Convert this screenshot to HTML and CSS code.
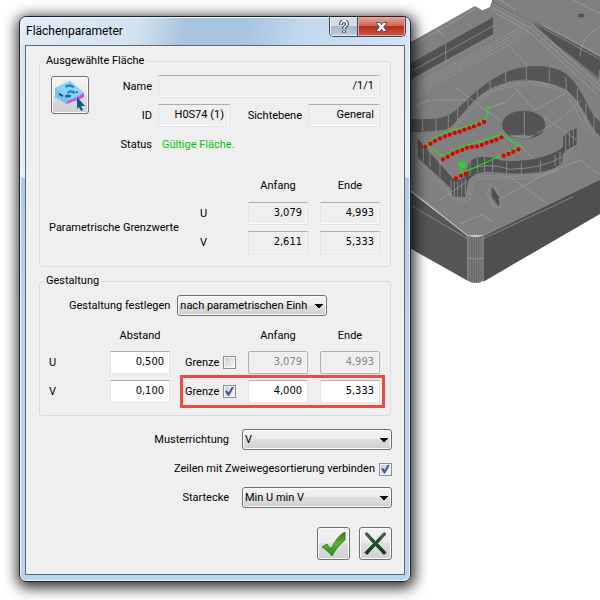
FILE: index.html
```
<!DOCTYPE html>
<html lang="de">
<head>
  <meta charset="UTF-8">
  <meta name="viewport" content="width=device-width, initial-scale=1.0">
  <title>Flächenparameter</title>
  <link rel="stylesheet" href="styles.css">
</head>
<body>

  <div class="dialog">
    <div class="titlebar">
      <span class="title">Flächenparameter</span>
      <div class="winbtns">
        <button type="button" class="help" aria-label="Hilfe">
          <svg width="10" height="14" viewBox="0 0 10 14">
            <path d="M2 5V4a3 3 0 0 1 6 0c0 2-3 2.300-3 5M5 10.500v2.500" fill="none" stroke="#3c4456" stroke-width="3.800"/>
            <path d="M2 4.500V4a3 3 0 0 1 6 0c0 2-3 2.300-3 4.500M5 11v1.500" fill="none" stroke="#fff" stroke-width="1.800"/>
          </svg>
        </button>
        <button type="button" class="close" aria-label="Schließen">
          <svg width="13" height="12" viewBox="0 0 13 12">
            <path d="M1 1.500h3.500l2 2.300 2-2.300H12L8.700 6l3.300 4.500H8.500l-2-2.300-2 2.300H1L4.300 6z" fill="#fff" stroke="#535666"/>
          </svg>
        </button>
      </div>
    </div>

    <form class="client">
      <fieldset>
        <legend>Ausgewählte Fläche</legend>
        <div class="selected">
          <button type="button" class="pick" aria-label="Fläche wählen">
            <svg width="34" height="34" viewBox="0 0 34 34">
              <path d="M2 10 17 3l14 12v2L14 26 2 19z" fill="#62bdea"/>
              <path d="M2 10 17 3l14 12-15 7z" fill="#8ad3f6"/>
              <path d="M2 10v9l12 7 2-4z" fill="#74c4ee"/>
              <path d="M13 26c2-5 6-4 9-5 3-1 5-4 9-6v4c-5 3-10 4-18 7z" fill="#e83ae0"/>
              <path d="M12 8c3-3 8-2 10 1l-3 1c-2-2-4-1-6 0zM14 14c3-3 8-2 9 1l-3 1c-1-2-3-1-5 0z" fill="#2a86c0"/>
              <path d="M6 15l4 2v2l-4-2z" fill="#1f3f66"/>
              <ellipse cx="15" cy="18" rx="3" ry="1.500" fill="#23639a"/>
              <circle cx="24" cy="14" r="1" fill="#23639a"/>
              <path d="M24 19v12l2-2 2 4 2-1-2-4h4z" fill="#0a5c86"/>
            </svg>
          </button>
          <div class="fields">
            <label for="name">Name</label>
            <input type="text" id="name" class="wide" value="/1/1" readonly>
            <label for="id">ID</label>
            <input type="text" id="id" value="H0S74 (1)" readonly>
            <label for="plane">Sichtebene</label>
            <input type="text" id="plane" value="General" readonly>
            <span class="lbl">Status</span>
            <output class="status wide">Gültige Fläche.</output>
          </div>
        </div>
        <div class="limits">
          <span class="head from">Anfang</span>
          <span class="head">Ende</span>
          <span class="caption">Parametrische Grenzwerte</span>
          <span class="axis">U</span>
          <input type="text" class="num" value="3,079" aria-label="U Anfang" readonly>
          <input type="text" class="num" value="4,993" aria-label="U Ende" readonly>
          <span class="axis">V</span>
          <input type="text" class="num" value="2,611" aria-label="V Anfang" readonly>
          <input type="text" class="num" value="5,333" aria-label="V Ende" readonly>
        </div>
      </fieldset>

      <fieldset>
        <legend>Gestaltung</legend>
        <div class="define">
          <label for="mode">Gestaltung festlegen</label>
          <select id="mode"><option>nach parametrischen Einheiten</option></select>
        </div>
        <div class="row heads">
          <span class="axis"></span>
          <span class="head">Abstand</span>
          <div class="range">
            <span class="head">Anfang</span>
            <span class="head">Ende</span>
          </div>
        </div>
        <div class="row">
          <label class="axis" for="stepu">U</label>
          <input type="text" class="num" id="stepu" value="0,500">
          <div class="range">
            <label class="limit">Grenze <input type="checkbox"></label>
            <input type="text" class="num" value="3,079" aria-label="U Anfang" disabled>
            <input type="text" class="num" value="4,993" aria-label="U Ende" disabled>
          </div>
        </div>
        <div class="row">
          <label class="axis" for="stepv">V</label>
          <input type="text" class="num" id="stepv" value="0,100">
          <div class="range marked">
            <label class="limit">Grenze <input type="checkbox" checked></label>
            <input type="text" class="num" value="4,000" aria-label="V Anfang">
            <input type="text" class="num" value="5,333" aria-label="V Ende">
          </div>
        </div>
      </fieldset>

      <div class="options">
        <div class="option">
          <label for="dir">Musterrichtung</label>
          <select id="dir"><option>V</option></select>
        </div>
        <label class="option check">Zeilen mit Zweiwegesortierung verbinden <input type="checkbox" checked></label>
        <div class="option">
          <label for="corner">Startecke</label>
          <select id="corner"><option>Min U min V</option></select>
        </div>
      </div>

      <div class="actions">
        <button type="submit" aria-label="OK">
          <svg width="29" height="29" viewBox="0 0 29 29">
            <defs>
              <linearGradient id="ok" x1="0" y1="0" x2="0" y2="1"><stop offset="0" stop-color="#3f7a2c"/><stop offset=".5" stop-color="#5cb52c"/><stop offset="1" stop-color="#2f8a10"/></linearGradient>
              <linearGradient id="no" x1="0" y1="0" x2="0" y2="1"><stop offset="0" stop-color="#41624a"/><stop offset="1" stop-color="#0b3a0b"/></linearGradient>
            </defs>
            <path d="M3 18l5-3 4 5C16 12 20 6 26 3v8c-5 4-9 9-13 16-3-4-6-6-10-9z" fill="url(#ok)" stroke="#2f7a1c" stroke-width=".8"/>
          </svg>
        </button>
        <button type="button" aria-label="Abbrechen">
          <svg width="29" height="29" viewBox="0 0 29 29">
            <path d="M4 5l2-1.500 8.500 9L23 3.500 25 5l-8.500 9.500 8.500 9-2 2-8.500-9L6 25.500l-2-2 8.500-9z" fill="url(#no)" stroke="url(#no)" stroke-linejoin="round"/>
          </svg>
        </button>
      </div>
    </form>
  </div>

  <svg class="scene" viewBox="33 0 567 900" role="img" aria-label="3D-Modell">
    <!-- block -->
    <path d="M0 145 225 18l22 13 22-9 8-22H600V540L250 706H203L0 545z" fill="#808080"/>
    <path d="M0 550 203 708V842L0 728z" fill="#565656"/>
    <path d="M250 706 600 538V642L250 845z" fill="#4f4f4f"/>
    <path d="M203 706q24 10 47 0V842q-22 14-47 0z" fill="#606060"/>
    <!-- walls -->
    <path d="M0 207 279 52v53L0 258z" fill="#535353"/>
    <path d="M277 0v12L395 72 600 244V172L283 0z" fill="#707070"/>
    <path d="M395 62 540 138 600 172V235L465 130z" fill="#535353"/>
    <path d="M0 357H70C150 360 160 335 200 300C260 245 320 198 410 198C500 200 520 240 545 280C565 320 580 350 600 365V408C570 385 550 310 500 270C440 235 340 230 270 266C215 295 190 350 145 388C120 400 80 395 0 398z" fill="#565656"/>
    <path d="M52 420C50 395 75 392 100 394L145 388 200 470 202 520 165 545 52 438z" fill="#808080"/>
    <path d="M52 415 55 475 150 562 158 590H196L203 548C215 520 240 515 270 515C350 525 450 525 487 490L490 440C450 475 350 490 300 480C250 465 215 465 203 500C200 535 180 548 158 535z" fill="#525252"/>
    <path d="M490 410Q505 390 530 385V435Q500 445 488 462z" fill="#515151"/>
    <path d="M275 560 298 592V620L275 590z" fill="#4e4e4e"/>
    <ellipse cx="371" cy="375" rx="65" ry="43" fill="#545454"/>
    <path d="M331 409q35-12 70 2-35 14-70-2z" fill="#7c7c7c"/>

    <!-- mesh -->
    <g class="mesh">
      <path d="M36 213 279 78M137 133v55M36 138 225 28M105 85l28 24M36 238 279 105"/>
      <path d="M277 10 395 72 600 258M283 3 600 178M280 24 392 85 600 272M275 32 388 96 590 282M300 0l48 30M520 0l80 40M430 75 600 168M540 168q0-55 60-88M325 138l60 58M440 155l20-25"/>
      <path d="M36 262 370 78M36 272 378 84M36 282 386 90M36 292 394 97" stroke-dasharray="5 2"/>
      <path d="M68 357v39M108 358v38M145 346v42M173 324v36M204 297v25M233 272v24M270 243v24M317 215v32M379 198v42M448 205v40M498 232v38M532 265v48M558 310v48M582 345v48"/>
      <path d="M145 390C190 350 210 300 275 272C340 238 440 240 500 276C545 315 555 375 585 410M155 392C200 350 220 305 280 277C350 245 440 248 490 280C535 320 540 370 570 405M320 248q55-18 120 5" stroke-dasharray="6 2"/>
      <path d="M100 300 200 300M165 260 245 322 300 360M345 265l60 65 90-50M495 345l50-45M430 350l100 70M410 400q40-20 80-50M350 425l50 50M36 322 90 300M260 325l60-20 40-40"/>
      <path d="M373 333v82M331 405q40 14 70 0"/>
      <path d="M70 430v55M90 450v52M120 478v55M153 540v35M163 545v45M173 545v45M185 542v48M196 535v48M210 485v42M232 472v45M254 470v46M278 478v38M320 485v35M364 488v33M421 482v33M465 465v32M480 455v38M508 392v48M520 388v49M497 400v53"/>
      <path d="M203 510Q260 485 330 508Q430 505 487 470"/>
      <path d="M205 550C225 510 280 535 370 528C430 528 470 510 490 482Q500 450 535 435M210 560C225 520 290 540 370 535C440 535 480 510 495 490Q510 460 542 445M50 430l-12-12M54 485 150 575q15 30 48 20l14-35M50 495 145 580q22 36 63 20l12-40" stroke-dasharray="5 3"/>
      <path d="M120 600 200 545M295 600 430 525 540 480M330 532 445 612M180 672l65-28 35 22M36 575 203 708h47L600 538M36 618 203 716M250 716 520 590M540 480l60 45"/>
      <path d="M262 580l10-25 12 5 17 35v28l-22-8zM268 590l12 30 18 8" stroke-dasharray="4 2"/>
      <path d="M206 708v136M212 709v138M219 710v138M226 710v139M233 710v139M240 709v138M246 708v137M203 772q24 10 48 0"/>
      <path d="M598 210v34"/>
    </g>
    <path d="M535 42h16v9h-16zM543 38v16" fill="#4f4f4f" stroke="#4f4f4f"/>

    <!-- tool path and points -->
    <path class="toolpath" d="M266 321 256 360 225 372 140 397 105 412 77 434 130 468 180 443 210 433 305 403 355 438 330 455 178 523 187 503"/>
    <g class="toolpath">
      <circle cx="187" cy="494" r="9"/>
      <path d="M187 485v18M178 494h18"/>
    </g>
    <g class="points">
      <path d="M76 440h0M91 431h0M105 423h0M120 415h0M135 409h0M149 404h0M164 399h0M179 395h0M193 389h0M208 384h0M222 379h0M237 373h0M252 366h0"/>
      <path d="M129 478h0M143 470h0M158 461h0M172 455h0M187 450h0M201 443h0M216 441h0M231 439h0M246 435h0M260 429h0M275 424h0M289 419h0M304 412h0"/>
      <path d="M311 467h0M326 462h0M340 455h0M355 448h0M168 535h0M183 527h0M197 521h0"/>
    </g>
  </svg>

</body>
</html>
```
FILE: styles.css
```
* {
  box-sizing: border-box;
}

body {
  margin: 0;
  padding-left: 19px;
  min-height: 100vh;
  display: flex;
  align-items: flex-start;
  background-color: #fff;
  color: #000;
  font: 11px/16px Roboto, "Liberation Sans", sans-serif;
}

input, select, button {
  font: inherit;
  color: inherit;
  margin: 0;
}

/* window */
.dialog {
  position: relative;
  z-index: 1;
  flex: 1;
  min-width: 0;
  margin-top: 16px;
  padding: 0 5px 6px;
  border: 1px solid #1c232c;
  border-radius: 7px;
  background: linear-gradient(#d6e5f4 28px, #e6f0fa 160px, #aecbe6 161px, #b8d4ee 300px, #b8d4ee);
  box-shadow: inset 0 0 0 1px #eef6fd, 1px 3px 14px 3px rgba(0, 0, 0, .8);
}

.titlebar {
  display: flex;
  justify-content: space-between;
  height: 28px;
  margin: 0 -4px;
  padding: 0 3px 0 5px;
  border-radius: 6px 6px 0 0;
  border-top: 1px solid #eef6fd;
  background: linear-gradient(100deg, #e2edf7, #d3e2f1 30%, #a8c4df 42%, #a8c4df 58%, #c2d8ee 72%, #d3e4f5);
}

.title {
  line-height: 26px;
  font-size: 12px;
}

.winbtns {
  display: flex;
  height: 20px;
  margin-top: -1px;
  border: 1px solid #3f4a5a;
  border-top: 0;
  border-radius: 0 0 5px 5px;
  overflow: hidden;
}

.winbtns button {
  display: flex;
  justify-content: center;
  align-items: center;
  padding: 0;
  border: 1px solid rgba(255, 255, 255, .6);
}

.help {
  width: 28px;
  background: linear-gradient(#d3deea 45%, #a5b6c8 46%, #bccbdc);
}

.winbtns .close {
  width: 47px;
  border-color: #e9a59c;
  box-shadow: -1px 0 #3f4a5a;
  background: linear-gradient(#e39f92, #cf6654 45%, #b02c18 46%, #d0503c);
}

.client {
  padding: 7px 12px 14px 13px;
  border: 1px solid #5a6878;
  background-color: #efefef;
}

/* groups */
fieldset {
  min-width: 0;
  margin: 0 1px 6px 0;
  padding: 6px 10px 12px 9px;
  border: 1px solid #d3dde6;
  border-radius: 3px;
}

legend {
  margin-left: -5px;
  padding: 0 2px;
}

input[type="text"] {
  width: 100%;
  min-width: 0;
  height: 23px;
  padding: 0 5px 2px;
  border: 1px solid #e0e3e9;
  border-top-color: #abadb3;
  border-radius: 1px;
  background-color: #fff;
  text-align: right;
}

.num {
  font-family: "DejaVu Sans Condensed", "DejaVu Sans", sans-serif;
}

input[type="text"]:read-only {
  background-color: #efefef;
  box-shadow: inset -1px -1px #fafafa;
}

input[type="text"]:disabled {
  border-color: #afafaf;
  border-radius: 2px;
  background-color: #efefef;
  color: #838383;
}

.selected {
  display: flex;
  align-items: flex-start;
  padding-left: 2px;
}

.pick,
.actions button {
  display: flex;
  justify-content: center;
  align-items: center;
  padding: 0;
  border: 1px solid #707070;
  border-radius: 3px;
  background: linear-gradient(#f3f3f3, #ebebeb 49%, #dedede 50%, #d0d0d0);
  box-shadow: inset 0 0 0 1px #fbfbfb;
}

.pick {
  width: 38px;
  height: 38px;
  margin-top: 1px;
}

.fields {
  flex: 1;
  display: grid;
  grid-template-columns: 63px 1fr 66px 1fr;
  grid-auto-rows: 23px;
  align-items: center;
  gap: 6px;
}

.fields label,
.fields .lbl {
  text-align: right;
}

.wide {
  grid-column: 2 / 5;
}

.status {
  padding-left: 4px;
  color: #00c800;
}

.limits {
  display: grid;
  grid-template-columns: 1fr 46px 60px 60px;
  align-items: center;
  gap: 6px 12px;
  margin-top: 22px;
}

.from {
  grid-column: 3;
}

.caption {
  grid-row: 2 / 4;
  min-width: 0;
  white-space: nowrap;
}

.head {
  text-align: center;
}

.limits .head {
  padding-bottom: 2px;
}

.limits .axis {
  padding-left: 10px;
}

select {
  appearance: none;
  width: 150px;
  height: 21px;
  padding: 0 19px 0 2px;
  border: 1px solid #707070;
  border-radius: 3px;
  background:
    conic-gradient(from -45deg at 50% 100%, #000 90deg, transparent 0) right 3px center / 8px 4px no-repeat,
    linear-gradient(#f4f4f4, #ebebeb 49%, #dedede 50%, #d0d0d0);
  box-shadow: inset 0 0 0 1px #fbfbfb;
}

.define {
  display: flex;
  align-items: center;
  gap: 7px;
  padding-left: 20px;
}

.row {
  display: flex;
  align-items: center;
  justify-content: space-between;
  margin-top: 6px;
}

.heads {
  margin: 12px 0 7px;
}

.row > .axis {
  width: 61px;
}

.row > input[type="text"],
.row > .head {
  width: 60px;
}

.row .range {
  display: flex;
  justify-content: flex-end;
  gap: 12px;
  flex: 1;
  margin-left: 15px;
}

.range .head,
.range input[type="text"] {
  width: 60px;
}

.limit,
.check {
  display: flex;
  align-items: center;
}

.limit {
  flex: 1;
  justify-content: space-between;
}

/* highlighted row */
.marked {
  outline: 3px solid #e84c46;
  outline-offset: 2px;
}

input[type="checkbox"] {
  appearance: none;
  width: 13px;
  height: 13px;
  border: 1px solid #8e8f8f;
  background: linear-gradient(135deg, #c9cdd3, #f8f8f8) center / 9px 9px no-repeat #f4f4f4;
}

input[type="checkbox"]:checked::after {
  content: "";
  display: block;
  width: 9px;
  height: 9px;
  margin: 1px;
  background-color: #41589c;
  clip-path: polygon(0 45%, 22% 38%, 40% 62%, 75% 0, 100% 0, 45% 100%, 32% 100%);
}

/* options */
.options {
  margin-top: 13px;
}

.option {
  display: flex;
  align-items: center;
  justify-content: flex-end;
  gap: 13px;
}

.check {
  gap: 4px;
  margin: 11px 0 10px;
}

.actions {
  display: flex;
  justify-content: flex-end;
  gap: 9px;
  margin-top: 19px;
}

.actions button {
  width: 33px;
  height: 33px;
}

/* part view */
.scene {
  flex: none;
  width: 189px;
  height: 300px;
}

.mesh {
  fill: none;
  stroke: #a2a2a2;
  stroke-width: 2;
}

.toolpath {
  fill: none;
  stroke: #0f0;
  stroke-width: 3;
}

.points {
  fill: none;
  stroke: #e00000;
  stroke-width: 13;
  stroke-linecap: round;
}
```
